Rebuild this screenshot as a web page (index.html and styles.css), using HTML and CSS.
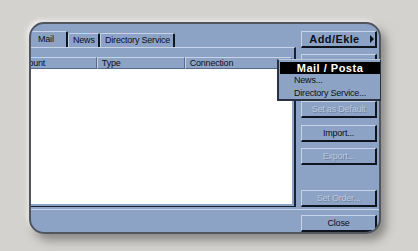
FILE: index.html
```html
<!DOCTYPE html>
<html lang="en">
<head>
    <meta charset="UTF-8">
    <title>Accounts</title>
    <link rel="stylesheet" href="styles.css">
</head>
<body>
    <div class="desk">
        <div class="window">
            <div class="main">
                <div class="left">
                    <div class="tabs">
                        <div class="tab active">Mail</div>
                        <div class="tab">News</div>
                        <div class="tab">Directory Service</div>
                    </div>
                    <div class="page">
                        <div class="list">
                            <div class="list-head">
                                <div class="col col-account">Account</div>
                                <div class="col col-type">Type</div>
                                <div class="col col-conn">Connection</div>
                            </div>
                            <div class="list-body"></div>
                        </div>
                    </div>
                </div>
                <div class="buttons">
                    <button class="btn btn-add">Add/Ekle <span class="arrow"></span></button>
                    <!-- these two sit under the open menu -->
                    <button class="btn"></button>
                    <button class="btn"></button>
                    <button class="btn disabled">Set as Default</button>
                    <button class="btn">Import...</button>
                    <button class="btn disabled">Export...</button>
                    <button class="btn disabled order">Set Order...</button>
                </div>
            </div>
            <div class="footer">
                <button class="btn">Close</button>
            </div>
        </div>

        <!-- popup opened from Add/Ekle -->
        <div class="menu">
            <div class="menu-item default">Mail / Posta</div>
            <div class="menu-item">News...</div>
            <div class="menu-item">Directory Service...</div>
        </div>
    </div>
</body>
</html>
```

FILE: styles.css
```css
* {
    margin: 0;
    padding: 0;
    box-sizing: border-box;
}

body {
    font-family: "Liberation Sans", Arial, sans-serif;
    font-size: 9px;
    letter-spacing: -0.2px;
    color: #0c1018;
    background-color: #d3d2ce;
}

.desk {
    position: relative;
    width: 418px;
    height: 251px;
    padding: 22px 0 0 29px;
}

.window {
    width: 352px;
    height: 212px;
    background: #8ca3c6;
    border: 2px solid #51555e;
    border-radius: 15px;
    overflow: hidden;
    box-shadow: 5px 6px 10px rgba(60, 60, 60, 0.5), -2px -2px 5px rgba(255, 255, 255, 0.75);
    display: flex;
    flex-direction: column;
}

.main {
    height: 190px;
    display: flex;
}

.left {
    width: 265px;
    display: flex;
    flex-direction: column;
}

.tabs {
    margin-top: 7px;
    height: 16px;
    display: flex;
    align-items: flex-end;
}

.tab {
    height: 14px;
    line-height: 13px;
    padding: 0 4px;
    white-space: nowrap;
    border-top: 1px solid #c6d3e8;
    border-left: 1px solid #c6d3e8;
    border-right: 2px solid #0e1420;
    border-radius: 2px 2px 0 0;
}

.tab:nth-child(1) { width: 37px; padding-left: 7px; }
.tab:nth-child(2) { width: 32px; }
.tab:nth-child(3) { width: 75px; }

.tab.active {
    height: 16px;
    line-height: 15px;
    border-left: none;
}

.page {
    height: 160px;
    padding: 9px 2px 2px 0;
    border-top: 1px solid #c6d3e8;
    border-right: 2px solid #1a2130;
    border-bottom: 1px solid #1a2130;
}

.list {
    height: 147px;
    overflow: hidden;
    display: flex;
    flex-direction: column;
}

.list-head {
    height: 12px;
    display: flex;
    margin-left: -22px;
}

.col {
    height: 12px;
    line-height: 11px;
    padding-left: 4px;
    border-top: 1px solid #c6d3e8;
    border-left: 1px solid #c6d3e8;
    border-right: 1px solid #56698a;
    border-bottom: 1px solid #56698a;
    white-space: nowrap;
}

.col-account { width: 90px; }
.col-type { width: 90px; }
.col-conn { width: 110px; }

.list-body {
    flex: 1;
    background: #ffffff;
}

.buttons {
    width: 76px;
    margin-left: 5px;
    padding-top: 7px;
    display: flex;
    flex-direction: column;
    gap: 6.4px;
}

.btn {
    width: 76px;
    height: 17px;
    font: inherit;
    letter-spacing: inherit;
    color: #0c1018;
    background: #8ca3c6;
    border-top: 1px solid #c6d3e8;
    border-left: 1px solid #c6d3e8;
    border-right: 2px solid #0e1420;
    border-bottom: 2px solid #0e1420;
    display: flex;
    align-items: center;
    justify-content: center;
    white-space: nowrap;
}

.btn.disabled {
    color: #b9c7dc;
    text-shadow: 1px 1px 0 rgba(90, 108, 140, 0.6);
}

.btn.order {
    margin-top: 19px;
}

.btn-add {
    font-weight: bold;
    font-size: 11px;
    letter-spacing: 0.4px;
    gap: 10px;
    padding-left: 6px;
}

.arrow {
    width: 0;
    height: 0;
    border-top: 4px solid transparent;
    border-bottom: 4px solid transparent;
    border-left: 4px solid #0c1018;
}

.footer {
    flex: 1;
    border-top: 1px solid #c6d3e8;
    padding: 5px 2px 0 0;
    display: flex;
    justify-content: flex-end;
}

.menu {
    position: absolute;
    left: 277px;
    top: 59px;
    width: 104px;
    height: 42px;
    padding: 2px 0 1px 1px;
    background: #8ca3c6;
    border-top: 1px solid #b9c7dc;
    border-left: 2px solid #2a3140;
    border-right: 1px solid #2a3140;
    border-bottom: 2px solid #2a3140;
}

.menu-item {
    height: 12.5px;
    line-height: 12px;
    padding-left: 14px;
    white-space: nowrap;
}

.menu-item.default {
    height: 12px;
    padding-left: 0;
    text-align: center;
    background: #000000;
    color: #ffffff;
    font-weight: bold;
    font-size: 11px;
    letter-spacing: 0.5px;
}
```
